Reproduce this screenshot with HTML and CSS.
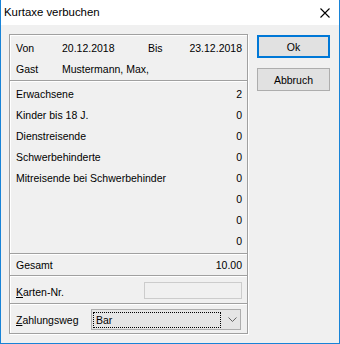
FILE: index.html
```html
<!DOCTYPE html>
<html lang="de">
<head>
    <meta charset="UTF-8">
    <title>Kurtaxe verbuchen</title>
    <link rel="stylesheet" href="styles.css">
</head>
<body>
    <div class="window">
        <div class="titlebar">
            <span class="title">Kurtaxe verbuchen</span>
            <svg class="close" width="10" height="10" viewBox="0 0 10 10">
                <path d="M0.5 0.5 L9.5 9.5 M9.5 0.5 L0.5 9.5" stroke="#000" stroke-width="1.1" fill="none"/>
            </svg>
        </div>
        <div class="client">
            <div class="group">
                <div class="section head">
                    <div class="row period">
                        <span>Von</span>
                        <span>20.12.2018</span>
                        <span>Bis</span>
                        <span class="num">23.12.2018</span>
                    </div>
                    <div class="row guest">
                        <span>Gast</span>
                        <span>Mustermann, Max,</span>
                    </div>
                </div>
                <div class="section counts">
                    <div class="row"><span class="label">Erwachsene</span><span class="num">2</span></div>
                    <div class="row"><span class="label">Kinder bis 18 J.</span><span class="num">0</span></div>
                    <div class="row"><span class="label">Dienstreisende</span><span class="num">0</span></div>
                    <div class="row"><span class="label">Schwerbehinderte</span><span class="num">0</span></div>
                    <div class="row"><span class="label">Mitreisende bei Schwerbehinder</span><span class="num">0</span></div>
                    <div class="row"><span class="label"></span><span class="num">0</span></div>
                    <div class="row"><span class="label"></span><span class="num">0</span></div>
                    <div class="row"><span class="label"></span><span class="num">0</span></div>
                </div>
                <div class="section total">
                    <div class="row"><span class="label">Gesamt</span><span class="num">10.00</span></div>
                </div>
                <div class="section card">
                    <span class="field-label"><u>K</u>arten-Nr.</span>
                    <div class="textbox"></div>
                </div>
                <div class="section pay">
                    <span class="field-label"><u>Z</u>ahlungsweg</span>
                    <div class="combo">
                        <span class="combo-value">Bar</span>
                        <svg class="chevron" width="9" height="5" viewBox="0 0 9 5">
                            <polyline points="0.5,0.5 4.5,4.5 8.5,0.5" stroke="#606060" fill="none"/>
                        </svg>
                    </div>
                </div>
            </div>
            <div class="actions">
                <button class="btn default">Ok</button>
                <button class="btn">Abbruch</button>
            </div>
        </div>
    </div>
</body>
</html>
```

FILE: styles.css
```css
body {
    margin: 0;
    font-family: 'Liberation Sans', Arial, sans-serif;
    font-size: 10.5px;
    color: #000;
    background: #f0f0f0;
}
.window {
    width: 340px;
    height: 344px;
    box-sizing: border-box;
    border: 1px solid #1883d7;
    border-top: none;
    background: #f0f0f0;
    display: flex;
    flex-direction: column;
}
.titlebar {
    height: 25px;
    background: #fff;
    display: flex;
    align-items: center;
    justify-content: space-between;
    padding: 0 9px 0 3px;
}
.title {
    font-size: 11.4px;
    padding-bottom: 1px;
}
.close {
    display: block;
    margin-top: 1px;
}
.client {
    display: flex;
    align-items: flex-start;
    padding: 9px 0 0 8px;
}
.group {
    width: 239px;
    height: 300px;
    box-sizing: border-box;
    border: 1px solid #a0a0a0;
    box-shadow: 1px 1px 0 #fff, inset 1px 1px 0 #fff;
    display: flex;
    flex-direction: column;
}
.section {
    padding: 0 5px 0 6px;
    box-sizing: border-box;
}
.section + .section {
    border-top: 1px solid #a0a0a0;
    box-shadow: inset 0 1px 0 #fff;
}
.row {
    height: 21px;
    line-height: 21px;
    display: flex;
    justify-content: space-between;
    white-space: nowrap;
}
.num {
    text-align: right;
}
.head {
    height: 45px;
    padding-top: 3px;
}
.period {
    display: grid;
    grid-template-columns: 46px 86px 1fr auto;
}
.guest {
    justify-content: flex-start;
}
.guest span:first-child {
    width: 46px;
}
.counts {
    height: 173px;
    padding-top: 3px;
}
.total {
    height: 22px;
    padding-top: 2px;
}
.total .row {
    height: 19px;
    line-height: 19px;
}
.card,
.pay {
    display: flex;
    justify-content: space-between;
    align-items: flex-start;
}
.card {
    height: 28px;
}
.pay {
    height: 30px;
}
.field-label {
    line-height: 13px;
    padding-top: 10px;
}
.textbox {
    width: 98px;
    height: 17px;
    box-sizing: border-box;
    margin-top: 6px;
    border: 1px solid #cccccc;
    background: #f0f0f0;
}
.combo {
    width: 150px;
    height: 21px;
    box-sizing: border-box;
    margin: 5px 1px 0 0;
    border: 1px solid #adadad;
    background: #e5e5e5;
    display: flex;
    align-items: center;
    padding: 0 3px 0 1px;
}
.combo-value {
    width: 129px;
    height: 16px;
    line-height: 14px;
    box-sizing: border-box;
    border: 1px dotted #000;
    padding-left: 2px;
}
.chevron {
    display: block;
    margin-left: 7px;
}
.actions {
    display: flex;
    flex-direction: column;
    gap: 10px;
    margin-left: 9px;
    padding-top: 1px;
}
.btn {
    width: 73px;
    height: 23px;
    box-sizing: border-box;
    margin: 0;
    padding: 0;
    border: 1px solid #adadad;
    background: #e1e1e1;
    font-family: 'Liberation Sans', Arial, sans-serif;
    font-size: 10.5px;
    color: #000;
}
.btn.default {
    border: 2px solid #0078d7;
}
```
